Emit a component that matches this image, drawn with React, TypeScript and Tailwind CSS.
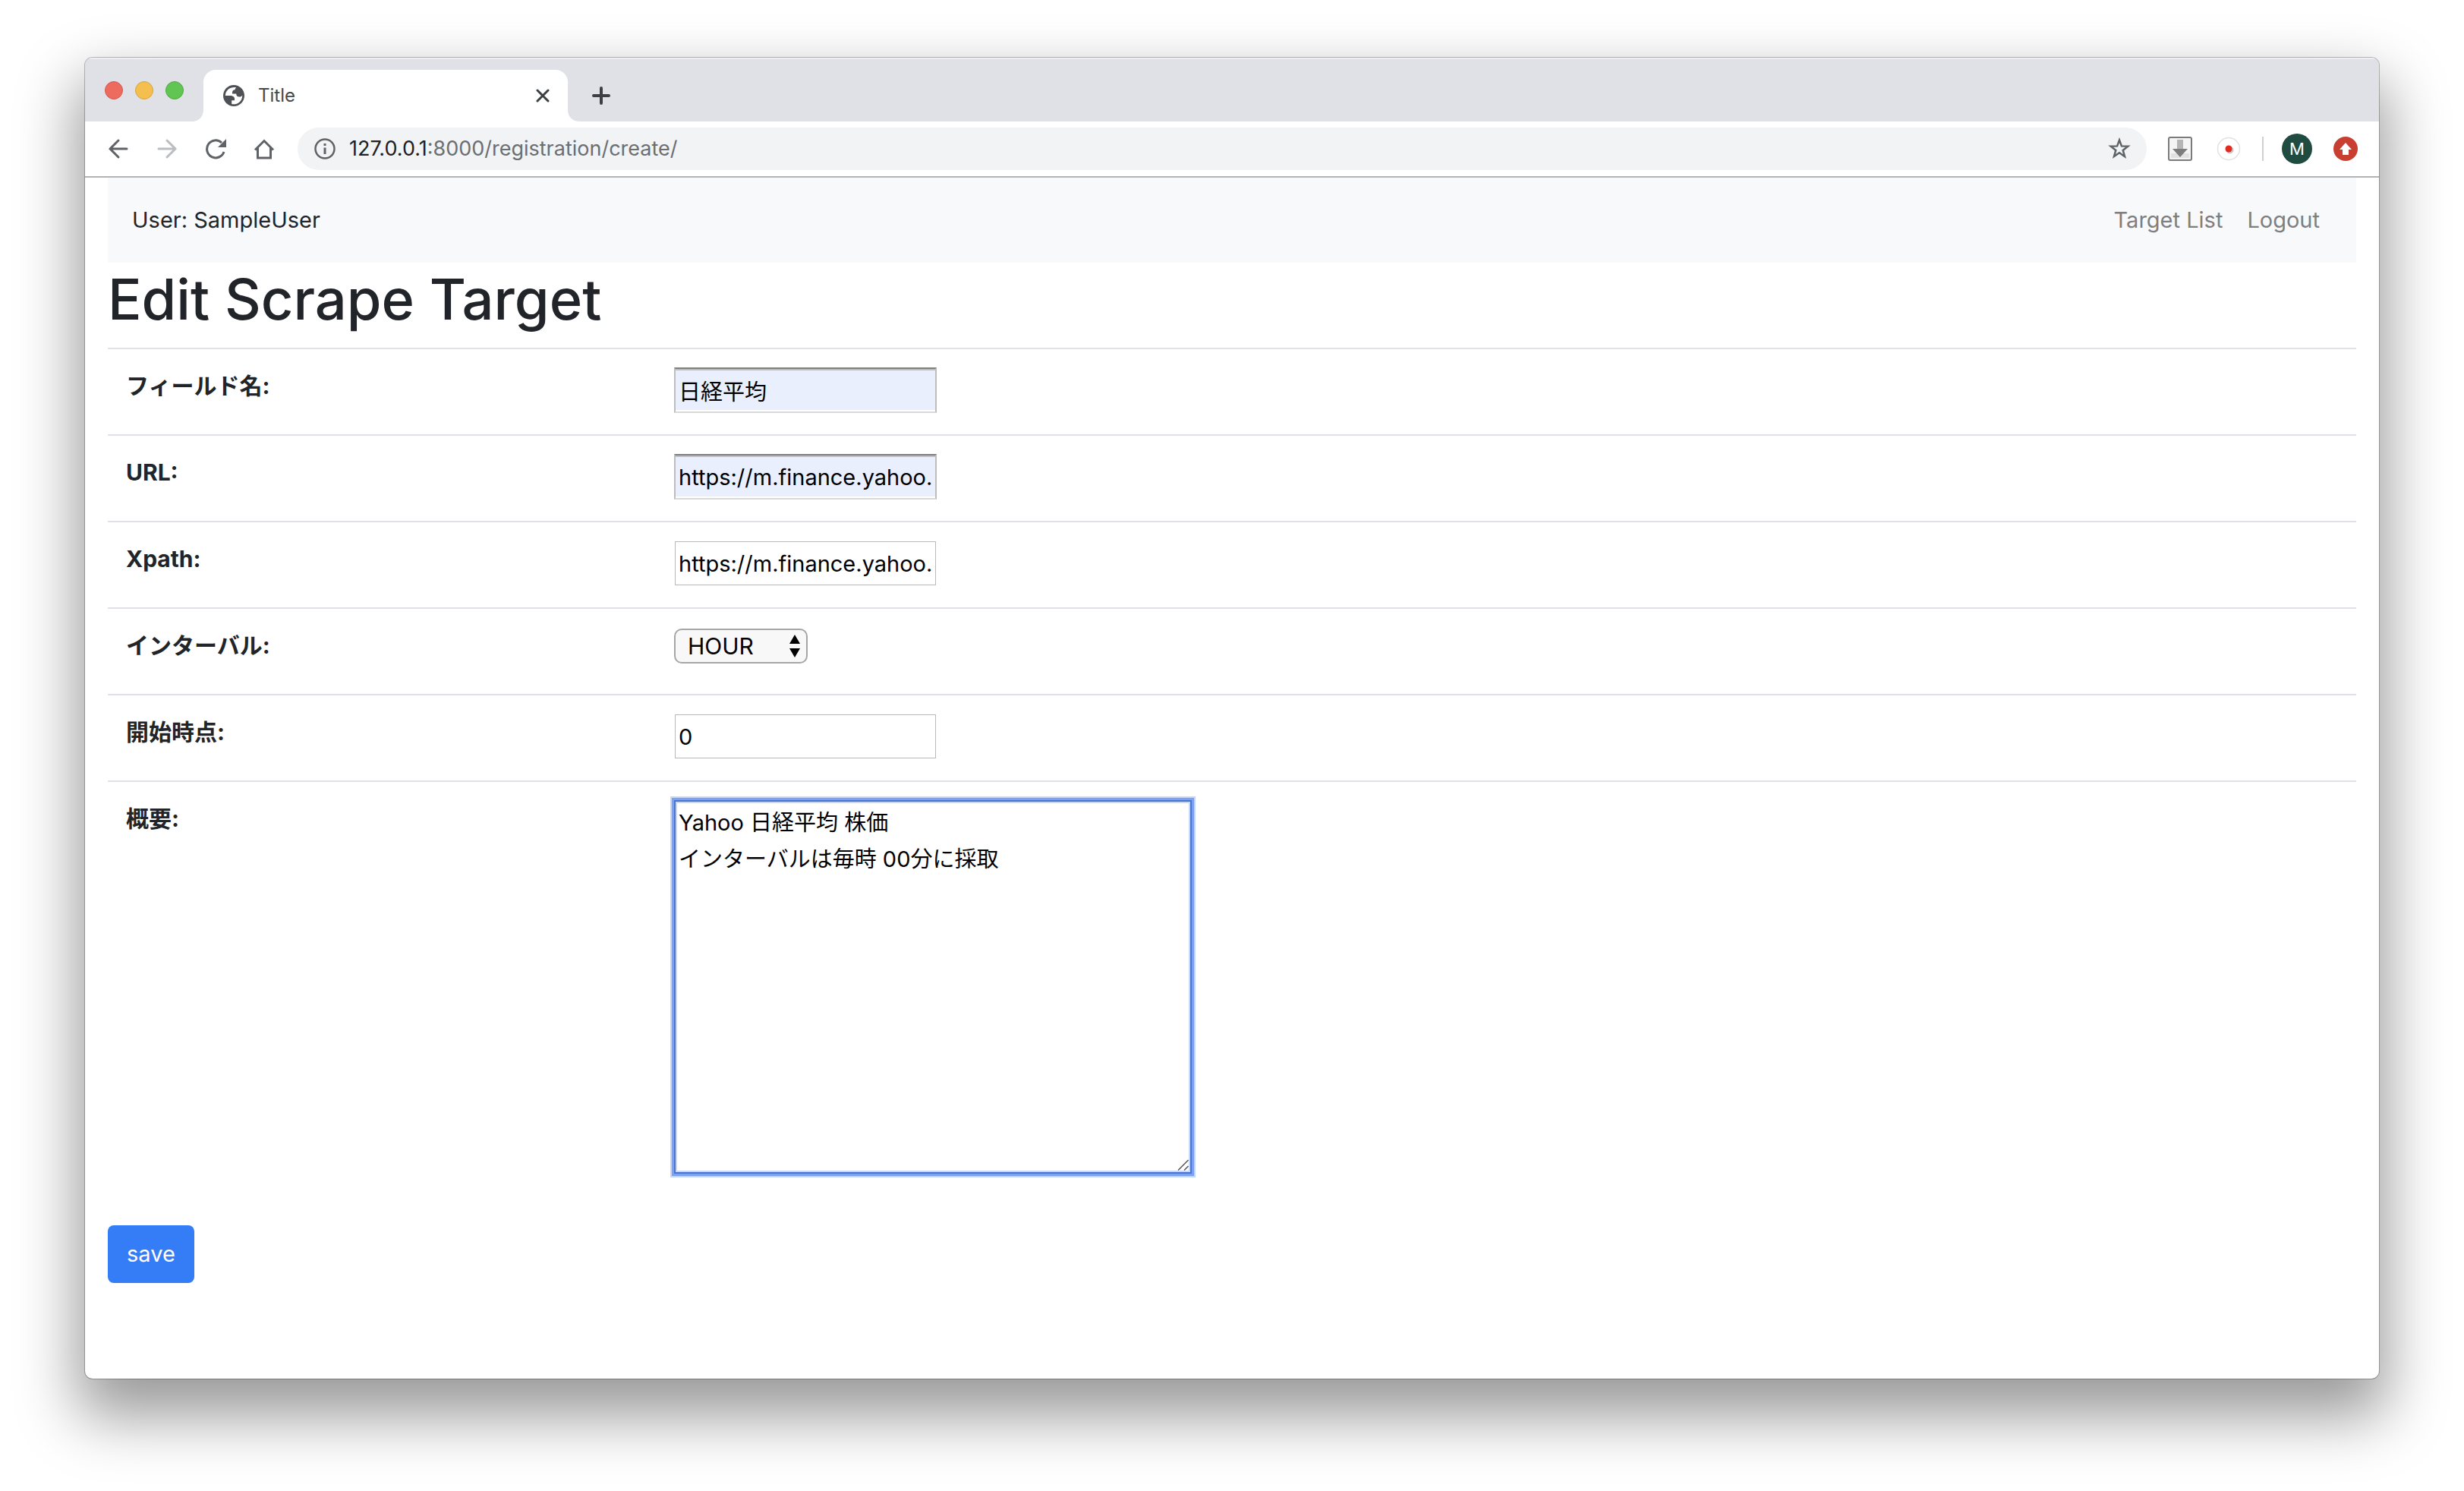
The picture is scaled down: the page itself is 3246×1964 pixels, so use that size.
import React from "react";

const fields = [
  { id: "name", label: "フィールド名:", value: "日経平均", filled: true },
  { id: "url", label: "URL:", value: "https://m.finance.yahoo.co.jp/stock?code=998407.O", filled: true },
  { id: "xpath", label: "Xpath:", value: "https://m.finance.yahoo.co.jp/stock?code=998407.O", filled: false },
];

const th = "w-[722px] p-6 text-left align-top text-[30px] font-bold";
const td = "px-6 pt-6 align-top";
const filledInput =
  "block h-[60px] w-[346px] border-2 border-x-[#bdbdbd] border-t-[#7f7f7f] border-b-[#d9d9d9] bg-[#e9effd] px-1 text-black shadow-[inset_0_2px_0_#bfbfbf,inset_0_-2px_0_#fff] outline-none";
const plainInput =
  "m-px block h-[58px] w-[344px] border border-[#b9b9b9] bg-white px-1 text-black outline-none";

function TrafficLights() {
  return (
    <div className="flex gap-4 pl-[26px] pt-[31px]">
      <button aria-label="Close window" className="size-6 rounded-full border border-[#d6574d] bg-[#ec6a5e]" />
      <button aria-label="Minimize window" className="size-6 rounded-full border border-[#d9a33c] bg-[#f4bf4f]" />
      <button aria-label="Zoom window" className="size-6 rounded-full border border-[#50a83e] bg-[#61c554]" />
    </div>
  );
}

function TabStrip() {
  return (
    <div className="flex h-[84px] bg-[#dfe1e6] shadow-[inset_0_2px_0_#eeeff1]">
      <TrafficLights />
      <div className="ml-2.5 flex pt-4">
        <svg className="h-4 w-4 self-end" viewBox="0 0 16 16" aria-hidden="true">
          <path d="M0 16h16V0C16 10 10 16 0 16z" fill="#fff" />
        </svg>
        <div className="flex h-[68px] w-[480px] items-center rounded-t-2xl bg-white pl-[26px] pr-6">
          <svg className="size-7" viewBox="2 2 20 20" aria-hidden="true">
            <path
              d="M12 2C6.480 2 2 6.480 2 12s4.480 10 10 10 10-4.480 10-10S17.520 2 12 2z"
              fill="#4d5156"
            />
            <path
              d="M4 12h4.400c3.400 0 4.800 1.500 4.300 4.500H10v3.300c3.600.900 7.500-.800 9.200-4.300.600-1.300.800-2.500.800-3.900-.700 1.200-1.700 1.500-2.900 1.400-1.900 0-2.800-1-2.800-2.800h-3.700c-.300-2.500.600-3.800 2.600-3.800 0-.900.400-1.500 1.200-2C10 3.200 4.200 6 4 12z"
              fill="#fff"
            />
          </svg>
          <span className="ml-[18px] flex-1 text-[24px] text-[#45494d]">Title</span>
          <button aria-label="Close tab">
            <svg className="size-[18px]" viewBox="0 0 18 18" fill="none" stroke="#3c4043" strokeWidth="3" strokeLinecap="round">
              <path d="M2 2l14 14M16 2L2 16" />
            </svg>
          </button>
        </div>
        <svg className="h-4 w-4 self-end" viewBox="0 0 16 16" aria-hidden="true">
          <path d="M16 16H0V0C0 10 6 16 16 16z" fill="#fff" />
        </svg>
        <button aria-label="New tab" className="ml-4 self-center">
          <svg className="size-6" viewBox="0 0 24 24" fill="none" stroke="#3c4043" strokeWidth="4" strokeLinecap="round">
            <path d="M12 2v20M2 12h20" />
          </svg>
        </button>
      </div>
    </div>
  );
}

function Toolbar() {
  return (
    <div className="flex h-[74px] items-center border-b-2 border-[#b3b3b6] bg-white pl-[30px] pr-7">
      <div className="flex w-[250px] items-center gap-9">
        <button aria-label="Back">
          <svg className="size-7" viewBox="0 0 28 28" fill="none" stroke="#5f6368" strokeWidth="3" strokeLinecap="round">
            <path d="M25 14H3M14 3L3 14l11 11" />
          </svg>
        </button>
        <button aria-label="Forward">
          <svg className="size-7" viewBox="0 0 28 28" fill="none" stroke="#bbbdc0" strokeWidth="3" strokeLinecap="round">
            <path d="M3 14h22M14 3l11 11-11 11" />
          </svg>
        </button>
        <button aria-label="Reload">
          <svg className="size-7" viewBox="0 0 28 28" fill="none">
            <path d="M25 18A11.500 11.500 0 1 1 22 6" stroke="#5f6368" strokeWidth="3" />
            <path d="M28 1v11H17z" fill="#5f6368" />
          </svg>
        </button>
        <button aria-label="Home">
          <svg className="size-7" viewBox="0 0 28 28" fill="none" stroke="#5f6368" strokeWidth="3">
            <path d="M2 15.500L14 3.500 26 15.500M5.500 12v14h17V12" />
          </svg>
        </button>
      </div>
      <div className="flex h-14 flex-1 items-center rounded-full bg-[#f1f3f4] pl-[22px] pr-[21px]">
        <svg className="size-7" viewBox="0 0 28 28" fill="none" aria-hidden="true">
          <circle cx="14" cy="14" r="12.500" stroke="#5f6368" strokeWidth="2.500" />
          <path d="M14 12.500V21M14 7v3" stroke="#5f6368" strokeWidth="3" />
        </svg>
        <span className="ml-[18px] flex-1 text-[27px] text-[#6b6e72]">
          <span className="text-[#202124]">127.0.0.1</span>:8000/registration/create/
        </span>
        <button aria-label="Bookmark this page">
          <svg className="size-[30px]" viewBox="0 0 30 30" fill="none" stroke="#5f6368" strokeWidth="2.500">
            <path d="M15 3.500l2.900 7.900 8.400.300-6.600 5.200 2.300 8.100-7-4.700-7 4.700 2.300-8.100-6.600-5.200 8.400-.300z" />
          </svg>
        </button>
      </div>
      <button aria-label="Downloads" className="ml-7">
        <svg className="size-8" viewBox="0 0 32 32">
          <rect x="1" y="1" width="30" height="30" rx="2" fill="#f4f4f4" stroke="#7b7b7b" strokeWidth="2" />
          <path d="M4 22h24v6H4z" fill="#e2e2e2" />
          <path d="M12 4h8v12h-8z" fill="#b5b5b5" />
          <path d="M6 16h20L16 27z" fill="#7d7d7d" />
        </svg>
      </button>
      <button aria-label="Recorder" className="ml-8">
        <svg className="size-8" viewBox="0 0 32 32">
          <circle cx="16" cy="16" r="14.500" fill="#fff" stroke="#e2e2e2" strokeWidth="1.500" />
          <circle cx="17.500" cy="17.500" r="5" fill="#cfc4c4" />
          <circle cx="16" cy="16" r="4.500" fill="#e22a1e" />
        </svg>
      </button>
      <div className="ml-7 h-8 w-0.5 bg-[#cfd0d2]" />
      <button aria-label="Profile" className="ml-6 flex size-10 items-center justify-center rounded-full bg-[#1f4b40] text-[22px] text-white">
        M
      </button>
      <button aria-label="Update browser" className="ml-7">
        <svg className="size-8" viewBox="0 0 32 32">
          <circle cx="16" cy="16" r="16" fill="#c83f31" />
          <path d="M16 8l8 9h-4v7h-8v-7H8z" fill="#fff" />
        </svg>
      </button>
    </div>
  );
}

export default function App() {
  return (
    <div className="min-h-screen bg-white px-28 pb-[148px] pt-[76px] font-['Inter','Noto_Sans_CJK_JP',sans-serif] text-[29px] leading-[48px] text-[#212529]">
      <div className="min-h-[1740px] overflow-hidden rounded-[10px] bg-white shadow-[0_0_0_1px_rgba(0,0,0,0.25),0_40px_80px_10px_rgba(0,0,0,0.4)]">
        <TabStrip />
        <Toolbar />
        <main className="px-[30px]">
          <nav className="flex h-28 items-center justify-between bg-[#f8f9fb] px-8">
            <span>User: SampleUser</span>
            <div className="flex gap-8 pr-4 text-[#7f7f80]">
              <a href="#targets">Target List</a>
              <a href="#logout">Logout</a>
            </div>
          </nav>
          <h1 className="mb-4 text-[74px] font-medium leading-[96px]">Edit Scrape Target</h1>
          <form onSubmit={(e) => e.preventDefault()}>
            <table className="w-full border-collapse">
              <tbody>
                {fields.map((f) => (
                  <tr key={f.id} className="h-[114px] border-t-2 border-[#dee2e6]">
                    <th scope="row" className={th}>
                      <label htmlFor={f.id}>{f.label}</label>
                    </th>
                    <td className={td}>
                      <input id={f.id} type="text" defaultValue={f.value} className={f.filled ? filledInput : plainInput} />
                    </td>
                  </tr>
                ))}
                <tr className="h-[114px] border-t-2 border-[#dee2e6]">
                  <th scope="row" className={th}>
                    <label htmlFor="interval">インターバル:</label>
                  </th>
                  <td className={td}>
                    <div className="relative mt-0.5 w-44">
                      <select
                        id="interval"
                        defaultValue="HOUR"
                        className="block h-[46px] w-full appearance-none rounded-[10px] border-2 border-[#a6a6a6] bg-[#f8f8f8] pl-4 text-[30px] leading-[42px] text-black"
                      >
                        <option>HOUR</option>
                        <option>DAY</option>
                      </select>
                      <svg className="pointer-events-none absolute right-2.5 top-2 h-[30px] w-3.5" viewBox="0 0 14 30" aria-hidden="true">
                        <path d="M7 0l7 12H0zM7 30l7-12H0z" />
                      </svg>
                    </div>
                  </td>
                </tr>
                <tr className="h-[114px] border-t-2 border-[#dee2e6]">
                  <th scope="row" className={th}>
                    <label htmlFor="start">開始時点:</label>
                  </th>
                  <td className={td}>
                    <input id="start" type="text" inputMode="numeric" defaultValue="0" className={plainInput} />
                  </td>
                </tr>
                <tr className="border-t-2 border-[#dee2e6]">
                  <th scope="row" className={th}>
                    <label htmlFor="summary">概要:</label>
                  </th>
                  <td className={td}>
                    <div className="relative w-fit">
                      <textarea
                        id="summary"
                        defaultValue={"Yahoo 日経平均 株価\nインターバルは毎時 00分に採取"}
                        className="block h-[492px] w-[682px] resize-none border-2 border-[#4a74cf] bg-white p-1 text-black shadow-[0_0_0_3px_#7ba1f0,0_0_0_5px_#c6d7fa,inset_0_0_0_2px_#c6d7fa] outline-none"
                      />
                      <svg
                        className="pointer-events-none absolute bottom-1 right-1 size-4"
                        viewBox="0 0 16 16"
                        fill="none"
                        stroke="#555"
                        strokeWidth="1.500"
                        aria-hidden="true"
                      >
                        <path d="M2 15.500L15.500 2M10 15.500L15.500 10" />
                      </svg>
                    </div>
                  </td>
                </tr>
              </tbody>
            </table>
            <button type="submit" className="mt-[68px] flex h-[76px] items-center rounded-lg bg-[#357df6] px-[25px] text-white">
              save
            </button>
          </form>
        </main>
      </div>
    </div>
  );
}
